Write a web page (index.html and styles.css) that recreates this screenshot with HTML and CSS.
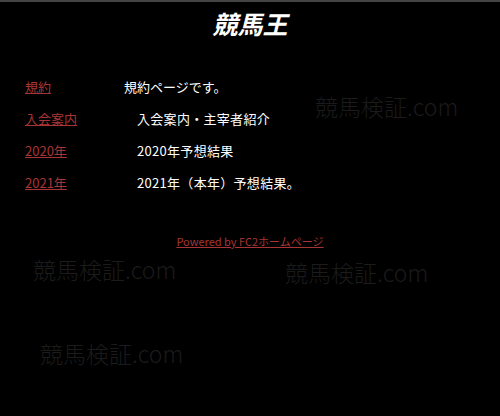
FILE: index.html
```html
<!DOCTYPE html>
<html lang="ja">
<head>
<meta charset="utf-8">
<title>競馬王</title>
<link rel="stylesheet" href="styles.css">
</head>
<body>
<div class="page">
  <h1 class="title">競馬王</h1>
  <div class="menu">
    <div class="row"><a class="link" href="#">規約</a><span class="desc">規約ページです。</span></div>
    <div class="row"><a class="link" href="#">入会案内</a><span class="desc indent">入会案内・主宰者紹介</span></div>
    <div class="row"><a class="link" href="#">2020年</a><span class="desc indent">2020年予想結果</span></div>
    <div class="row"><a class="link" href="#">2021年</a><span class="desc indent">2021年（本年）予想結果。</span></div>
  </div>
  <div class="footer"><a class="powered" href="#">Powered by FC2ホームページ</a></div>
  <span class="wm wm1">競馬検証.com</span>
  <span class="wm wm2">競馬検証.com</span>
  <span class="wm wm3">競馬検証.com</span>
  <span class="wm wm4">競馬検証.com</span>
</div>
</body>
</html>
```
FILE: styles.css
```css
html, body {
  margin: 0;
  padding: 0;
  background: #000;
  height: 100%;
}
body {
  font-family: "Noto Sans CJK JP", "Noto Sans", sans-serif;
  color: #fff;
}
.page {
  position: relative;
  border-top: 2px solid #444;
  height: 414px;
  overflow: hidden;
}
.title {
  margin: 0;
  padding-top: 6px;
  height: 38px;
  text-align: center;
  font-size: 25px;
  line-height: 30px;
  font-weight: bold;
  font-style: italic;
}
.menu {
  display: flex;
  flex-direction: column;
  padding-left: 25px;
  margin-top: 24px;
}
.row {
  display: flex;
  height: 32px;
  align-items: center;
  font-size: 13px;
}
.link {
  width: 99px;
  color: #a83535;
  text-decoration: underline;
}
.desc {
  color: #fff;
  position: relative;
  z-index: 1;
}
.indent {
  padding-left: 13px;
  letter-spacing: 0.3px;
}
.footer {
  text-align: center;
  margin-top: 35px;
  font-size: 11px;
  position: relative;
  z-index: 1;
}
.powered {
  color: #a83535;
  text-decoration: underline;
}
.wm {
  position: absolute;
  font-size: 23px;
  font-weight: 300;
  color: #1b1b1b;
  white-space: nowrap;
  line-height: 26px;
}
.wm1 { left: 315px; top: 91px; }
.wm2 { left: 33px; top: 254px; }
.wm3 { left: 285px; top: 257px; }
.wm4 { left: 40px; top: 338px; }
```
